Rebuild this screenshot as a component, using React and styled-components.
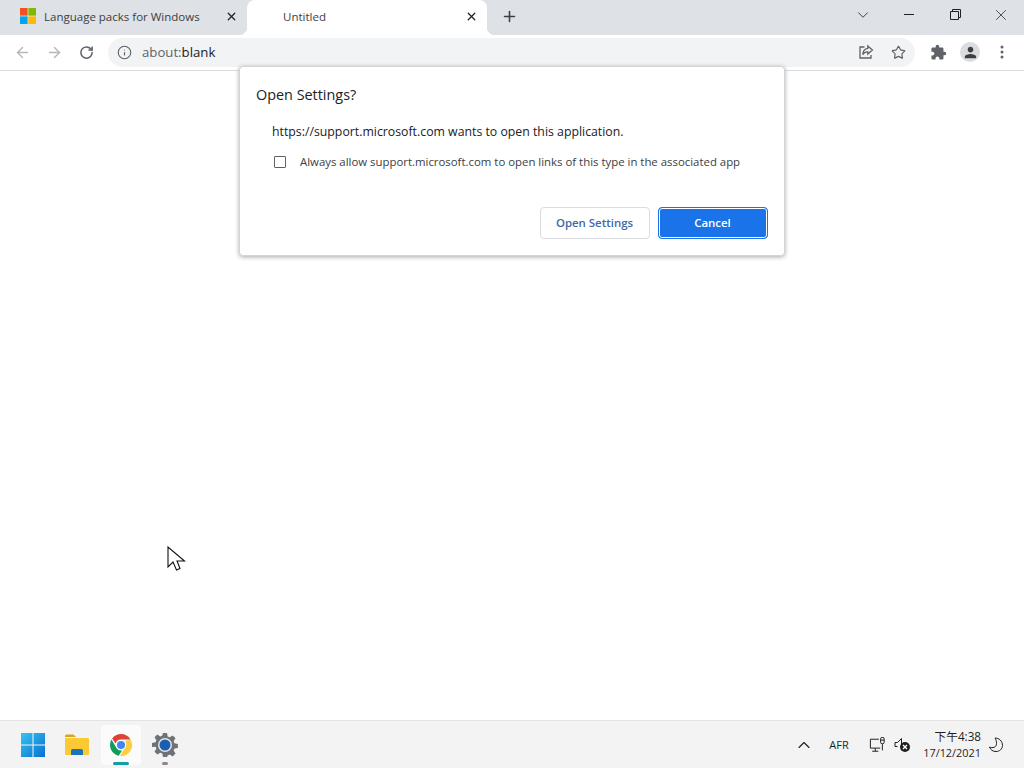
import React from 'react';
import styled, { createGlobalStyle } from 'styled-components';
import { MdExtension, MdPerson } from 'react-icons/md';
import { ArrowLeft, ArrowRight, RotateCw, Info, Star, X, Plus, ChevronDown, ChevronUp } from 'lucide-react';

const GlobalStyle = createGlobalStyle`
  html, body { margin: 0; padding: 0; height: 100%; background: #fff; overflow: hidden; }
  body { font-family: "Open Sans", "Noto Sans", "Noto Sans CJK SC", sans-serif; color: #202124; }
  * { box-sizing: border-box; }
`;

const Screen = styled.div`
  position: relative;
  width: 1024px;
  height: 768px;
  display: flex;
  flex-direction: column;
  overflow: hidden;
`;

const TabStrip = styled.div`
  height: 35px;
  background: #dee1e6;
  display: flex;
  align-items: stretch;
  flex: none;
`;

const Tab = styled.div`
  position: relative;
  width: ${p => p.$width}px;
  padding: 0 8px 3px ${p => p.$pad}px;
  display: flex;
  align-items: center;
  background: ${p => (p.$active ? '#fff' : 'transparent')};
  border-radius: 8px 8px 0 0;
  font-size: 11.5px;
  color: #3c4043;
  ${p => p.$active && `
    &::before, &::after {
      content: '';
      position: absolute;
      bottom: 0;
      width: 8px;
      height: 8px;
      background: radial-gradient(circle at var(--cx) 0, #dee1e6 8px, #fff 8.5px);
    }
    &::before { left: -8px; --cx: 0; }
    &::after { right: -8px; --cx: 8px; }
  `}
`;

const TabTitle = styled.span`
  flex: 1;
  white-space: nowrap;
  margin-left: ${p => p.$gap}px;
`;

const TabClose = styled.span`
  display: flex;
  width: 16px;
  justify-content: center;
  color: #202124;
`;

const NewTab = styled.div`
  width: 44px;
  padding-bottom: 3px;
  display: flex;
  align-items: center;
  justify-content: center;
  color: #3c4043;
`;

const WindowControls = styled.div`
  margin-left: auto;
  display: flex;
  align-items: flex-start;
  color: #202124;
`;

const WindowButton = styled.div`
  width: 46px;
  height: 29px;
  display: flex;
  align-items: center;
  justify-content: center;
`;

const MinimizeBar = styled.span`
  width: 10px;
  height: 1px;
  background: #202124;
`;

const Toolbar = styled.div`
  height: 36px;
  flex: none;
  background: #fff;
  border-bottom: 1px solid #dadce0;
  display: flex;
  align-items: center;
  padding: 0 6px 1px;
`;

const ToolButton = styled.div`
  width: 32px;
  height: 32px;
  display: flex;
  align-items: center;
  justify-content: center;
  color: ${p => (p.$muted ? '#b4b7bb' : '#5f6368')};
`;

const Omnibox = styled.div`
  flex: 1;
  height: 29px;
  margin: 0 7px 0 6px;
  padding: 0 1px 0 9px;
  border-radius: 15px;
  background: #f1f3f4;
  display: flex;
  align-items: center;
  color: #5f6368;
`;

const Url = styled.div`
  flex: 1;
  margin-left: 10px;
  font-size: 13.2px;
  color: #5f6368;
  span { color: #202124; }
`;

const OmniIcon = styled.div`
  width: 32px;
  display: flex;
  justify-content: center;
  color: #5f6368;
`;

const Avatar = styled.div`
  width: 20px;
  height: 20px;
  border-radius: 50%;
  background: #dadce0;
  display: flex;
  align-items: center;
  justify-content: center;
  color: #3c4043;
`;

const Page = styled.main`
  flex: 1;
  background: #fff;
`;

const Dialog = styled.div`
  position: absolute;
  left: 239px;
  top: 66px;
  width: 546px;
  height: 190px;
  background: #fff;
  border: 1px solid #d4d5d7;
  border-radius: 4px;
  box-shadow: 0 1px 4px rgba(60, 64, 67, 0.45);
  padding: 18px 16px 16px 16px;
  display: flex;
  flex-direction: column;
`;

const DialogTitle = styled.h2`
  margin: 0;
  font-size: 14.4px;
  line-height: 20px;
  font-weight: 400;
  color: #202124;
`;

const Message = styled.p`
  margin: 18px 0 0 16px;
  font-size: 12.3px;
  line-height: 18px;
  color: #202124;
`;

const CheckRow = styled.label`
  margin: 12px 0 0 18px;
  display: flex;
  align-items: center;
  gap: 14px;
  font-size: 11.4px;
  line-height: 18px;
  color: #3c4043;
`;

const CheckBox = styled.span`
  width: 12px;
  height: 12px;
  border: 1.5px solid #5f6368;
  border-radius: 1px;
`;

const Actions = styled.div`
  margin-top: auto;
  display: flex;
  justify-content: flex-end;
  gap: 8px;
`;

const Button = styled.button`
  height: 32px;
  width: ${p => p.$width}px;
  margin: 0;
  padding: 0 1px 2px 0;
  font-family: inherit;
  font-size: 11.45px;
  font-weight: 600;
  border-radius: 4px;
  border: 1px solid ${p => (p.$primary ? '#1a73e8' : '#dadce0')};
  background: ${p => (p.$primary ? '#1a73e8' : '#fff')};
  color: ${p => (p.$primary ? '#fff' : '#3f68ad')};
  box-shadow: ${p => (p.$primary ? 'inset 0 0 0 1px #fff' : 'none')};
`;

const Cursor = styled.svg`
  position: absolute;
  left: 167px;
  top: 546px;
`;

const Taskbar = styled.footer`
  height: 48px;
  flex: none;
  background: #f3f3f3;
  border-top: 1px solid #e4e4e4;
  display: flex;
  align-items: center;
  padding: 0 13px;
`;

const TaskIcon = styled.div`
  position: relative;
  width: 40px;
  height: 40px;
  margin-right: 4px;
  border-radius: 4px;
  display: flex;
  align-items: center;
  justify-content: center;
  background: ${p => (p.$open ? '#fbfbfb' : 'transparent')};
`;

const RunDot = styled.span`
  position: absolute;
  bottom: 0;
  left: 50%;
  transform: translateX(-50%);
  width: ${p => (p.$active ? 16 : 6)}px;
  height: 3px;
  border-radius: 2px;
  background: ${p => (p.$active ? '#0f9ea8' : '#8a8a8a')};
`;

const Tray = styled.div`
  margin-left: auto;
  display: flex;
  align-items: center;
  color: #1f1f1f;
`;

const TrayItem = styled.div`
  width: ${p => p.$width}px;
  display: flex;
  justify-content: center;
  align-items: center;
  font-size: 11px;
`;

const Clock = styled.div`
  width: 69px;
  text-align: right;
  font-size: 10.9px;
  line-height: 16px;
  white-space: nowrap;
`;

const ClockTime = styled.span`
  font-size: 11.7px;
`;

const MsLogo = () => (
  <svg width="16" height="16" viewBox="0 0 16 16">
    <rect width="7.6" height="7.6" fill="#f25022" />
    <rect x="8.4" width="7.6" height="7.6" fill="#7fba00" />
    <rect y="8.4" width="7.6" height="7.6" fill="#00a4ef" />
    <rect x="8.4" y="8.4" width="7.6" height="7.6" fill="#ffb900" />
  </svg>
);

const ShareIcon = () => (
  <svg width="16" height="16" viewBox="0 0 16 16" fill="none" stroke="#5f6368" strokeWidth="1.3">
    <path d="M6.5 3H2v11h11v-3" />
    <path d="M9.8 2l4.6 4-4.6 4V7.8C7.5 7.8 5.8 8.6 4.8 10.6 5 7.4 7 4.8 9.8 4.4z" />
  </svg>
);

const WinLogo = () => (
  <svg width="24" height="24" viewBox="0 0 24 24">
    <defs>
      <linearGradient id="win" x1="0" y1="0" x2="1" y2="1">
        <stop offset="0" stopColor="#35c4f2" />
        <stop offset="1" stopColor="#0a6fd0" />
      </linearGradient>
    </defs>
    <path fill="url(#win)" d="M0 0h11.5v11.5H0zM12.5 0H24v11.5H12.5zM0 12.5h11.5V24H0zM12.5 12.5H24V24H12.5z" />
  </svg>
);

const FolderIcon = () => (
  <svg width="26" height="24" viewBox="0 0 26 24">
    <path fill="#d9a520" d="M1 3a1.5 1.5 0 0 1 1.5-1.5h7L12 4h-11z" />
    <path fill="#fbc933" d="M1 5h23a1 1 0 0 1 1 1v15a1 1 0 0 1-1 1H2a1 1 0 0 1-1-1z" />
    <path fill="#1c73b8" d="M7 22v-4.500A1.500 1.500 0 0 1 8.500 16h9a1.500 1.500 0 0 1 1.500 1.500V22z" />
  </svg>
);

const ChromeIcon = () => (
  <svg width="24" height="24" viewBox="0 0 24 24">
    <path fill="#db4437" d="M12 1a11 11 0 0 1 9.530 5.500H12a5.500 5.500 0 0 0-5.300 4L3.100 5.600A11 11 0 0 1 12 1z" />
    <path fill="#0f9d58" d="M2.500 6.500l4.800 8.300A5.500 5.500 0 0 0 13 17.400L9.800 22.800A11 11 0 0 1 2.500 6.500z" />
    <path fill="#ffcd40" d="M21.530 6.500A11 11 0 0 1 11 23l4.800-8.200A5.500 5.500 0 0 0 16 8z" />
    <circle cx="12" cy="12" r="5" fill="#fff" />
    <circle cx="12" cy="12" r="4" fill="#4285f4" />
  </svg>
);

const GearIcon = () => (
  <svg width="26" height="26" viewBox="0 0 26 26">
    <path
      fill="#6e7276"
      d="M11 1h4l.7 3.400 2 .9 3-1.900 2.800 2.800-1.900 3 .9 2 3.400.7v4l-3.400.7-.9 2 1.900 3-2.800 2.800-3-1.900-2 .9L15 25h-4l-.7-3.400-2-.9-3 1.900-2.800-2.800 1.900-3-.9-2L0 15v-4l3.500-.7.900-2-1.900-3 2.800-2.800 3 1.900 2-.9z"
    />
    <circle cx="13" cy="13" r="7" fill="#e4e6e8" />
    <circle cx="13" cy="13" r="5.5" fill="#1b5fb0" />
  </svg>
);

const MonitorIcon = () => (
  <svg width="17" height="16" viewBox="0 0 19 18" fill="none" stroke="#1f1f1f" strokeWidth="1.1">
    <path d="M11 2.500H1.500v10h11M3.500 16h7M7 12.500V16" />
    <rect x="13" y="0.500" width="4" height="7" rx="1.500" />
    <path d="M13 3.500h4M15 8v7" />
  </svg>
);

const MutedSpeaker = () => (
  <svg width="17" height="16" viewBox="0 0 17 16">
    <path fill="none" stroke="#1f1f1f" d="M1 5.500h2.500L7.500 1.500v8M1 5.500v4h2.500" />
    <circle cx="11" cy="10" r="5" fill="#1f1f1f" />
    <path stroke="#fff" strokeWidth="1.3" d="M9 8l4 4M13 8l-4 4" />
  </svg>
);

const MoonIcon = () => (
  <svg width="16" height="16" viewBox="0 0 16 16" fill="none" stroke="#1f1f1f" strokeWidth="1">
    <path d="M7 1c4 0 7.500 3 7.500 7.500 0 3.500-3 6-6.500 6-3 0-5.500-1.500-6.500-4.500 3 1.500 7 .5 7-3.500C8.500 4 8 2.500 7 1z" />
  </svg>
);

export default function App() {
  return (
    <Screen>
      <GlobalStyle />
      <TabStrip>
        <Tab $width={247} $pad={20}>
          <MsLogo />
          <TabTitle $gap={8}>Language packs for Windows</TabTitle>
          <TabClose><X size={13} strokeWidth={2.4} /></TabClose>
        </Tab>
        <Tab $width={240} $pad={36} $active>
          <TabTitle $gap={0}>Untitled</TabTitle>
          <TabClose><X size={13} strokeWidth={2.4} /></TabClose>
        </Tab>
        <NewTab><Plus size={17} strokeWidth={2.2} /></NewTab>
        <WindowControls>
          <WindowButton><ChevronDown size={18} strokeWidth={1.1} /></WindowButton>
          <WindowButton><MinimizeBar /></WindowButton>
          <WindowButton>
            <svg width="11" height="11" viewBox="0 0 11 11" fill="none" stroke="#202124">
              <path d="M.5 2.500h8v8h-8zM2.500 2.500v-2h8v8h-2" />
            </svg>
          </WindowButton>
          <WindowButton><X size={18} strokeWidth={1} /></WindowButton>
        </WindowControls>
      </TabStrip>
      <Toolbar>
        <ToolButton $muted><ArrowLeft size={17} strokeWidth={2} /></ToolButton>
        <ToolButton $muted><ArrowRight size={17} strokeWidth={2} /></ToolButton>
        <ToolButton><RotateCw size={15} strokeWidth={2.4} /></ToolButton>
        <Omnibox>
          <Info size={15} strokeWidth={1.8} />
          <Url>about:<span>blank</span></Url>
          <OmniIcon><ShareIcon /></OmniIcon>
          <OmniIcon><Star size={15} strokeWidth={1.9} /></OmniIcon>
        </Omnibox>
        <ToolButton><MdExtension size={17} /></ToolButton>
        <ToolButton><Avatar><MdPerson size={17} /></Avatar></ToolButton>
        <ToolButton>
          <svg width="4" height="14" viewBox="0 0 4 14" fill="#5f6368">
            <circle cx="2" cy="2" r="1.5" />
            <circle cx="2" cy="7" r="1.5" />
            <circle cx="2" cy="12" r="1.5" />
          </svg>
        </ToolButton>
      </Toolbar>
      <Page />
      <Dialog>
        <DialogTitle>Open Settings?</DialogTitle>
        <Message>https://support.microsoft.com wants to open this application.</Message>
        <CheckRow>
          <CheckBox />
          Always allow support.microsoft.com to open links of this type in the associated app
        </CheckRow>
        <Actions>
          <Button $width={110}>Open Settings</Button>
          <Button $width={110} $primary>Cancel</Button>
        </Actions>
      </Dialog>
      <Cursor width="20" height="28" viewBox="0 0 20 28">
        <path
          fill="#fff"
          stroke="#111"
          strokeWidth="1.1"
          d="M1 1v20l5-5 3.500 8 3.500-1.500L10 15h7.500z"
        />
      </Cursor>
      <Taskbar>
        <TaskIcon><WinLogo /></TaskIcon>
        <TaskIcon><FolderIcon /></TaskIcon>
        <TaskIcon $open><ChromeIcon /><RunDot $active /></TaskIcon>
        <TaskIcon><GearIcon /><RunDot /></TaskIcon>
        <Tray>
          <TrayItem $width={24}><ChevronUp size={20} strokeWidth={1.3} /></TrayItem>
          <TrayItem $width={46}>AFR</TrayItem>
          <TrayItem $width={30}><MonitorIcon /></TrayItem>
          <TrayItem $width={20}><MutedSpeaker /></TrayItem>
          <Clock><ClockTime>下午4:38</ClockTime><br />17/12/2021</Clock>
          <TrayItem $width={30}><MoonIcon /></TrayItem>
        </Tray>
      </Taskbar>
    </Screen>
  );
}
